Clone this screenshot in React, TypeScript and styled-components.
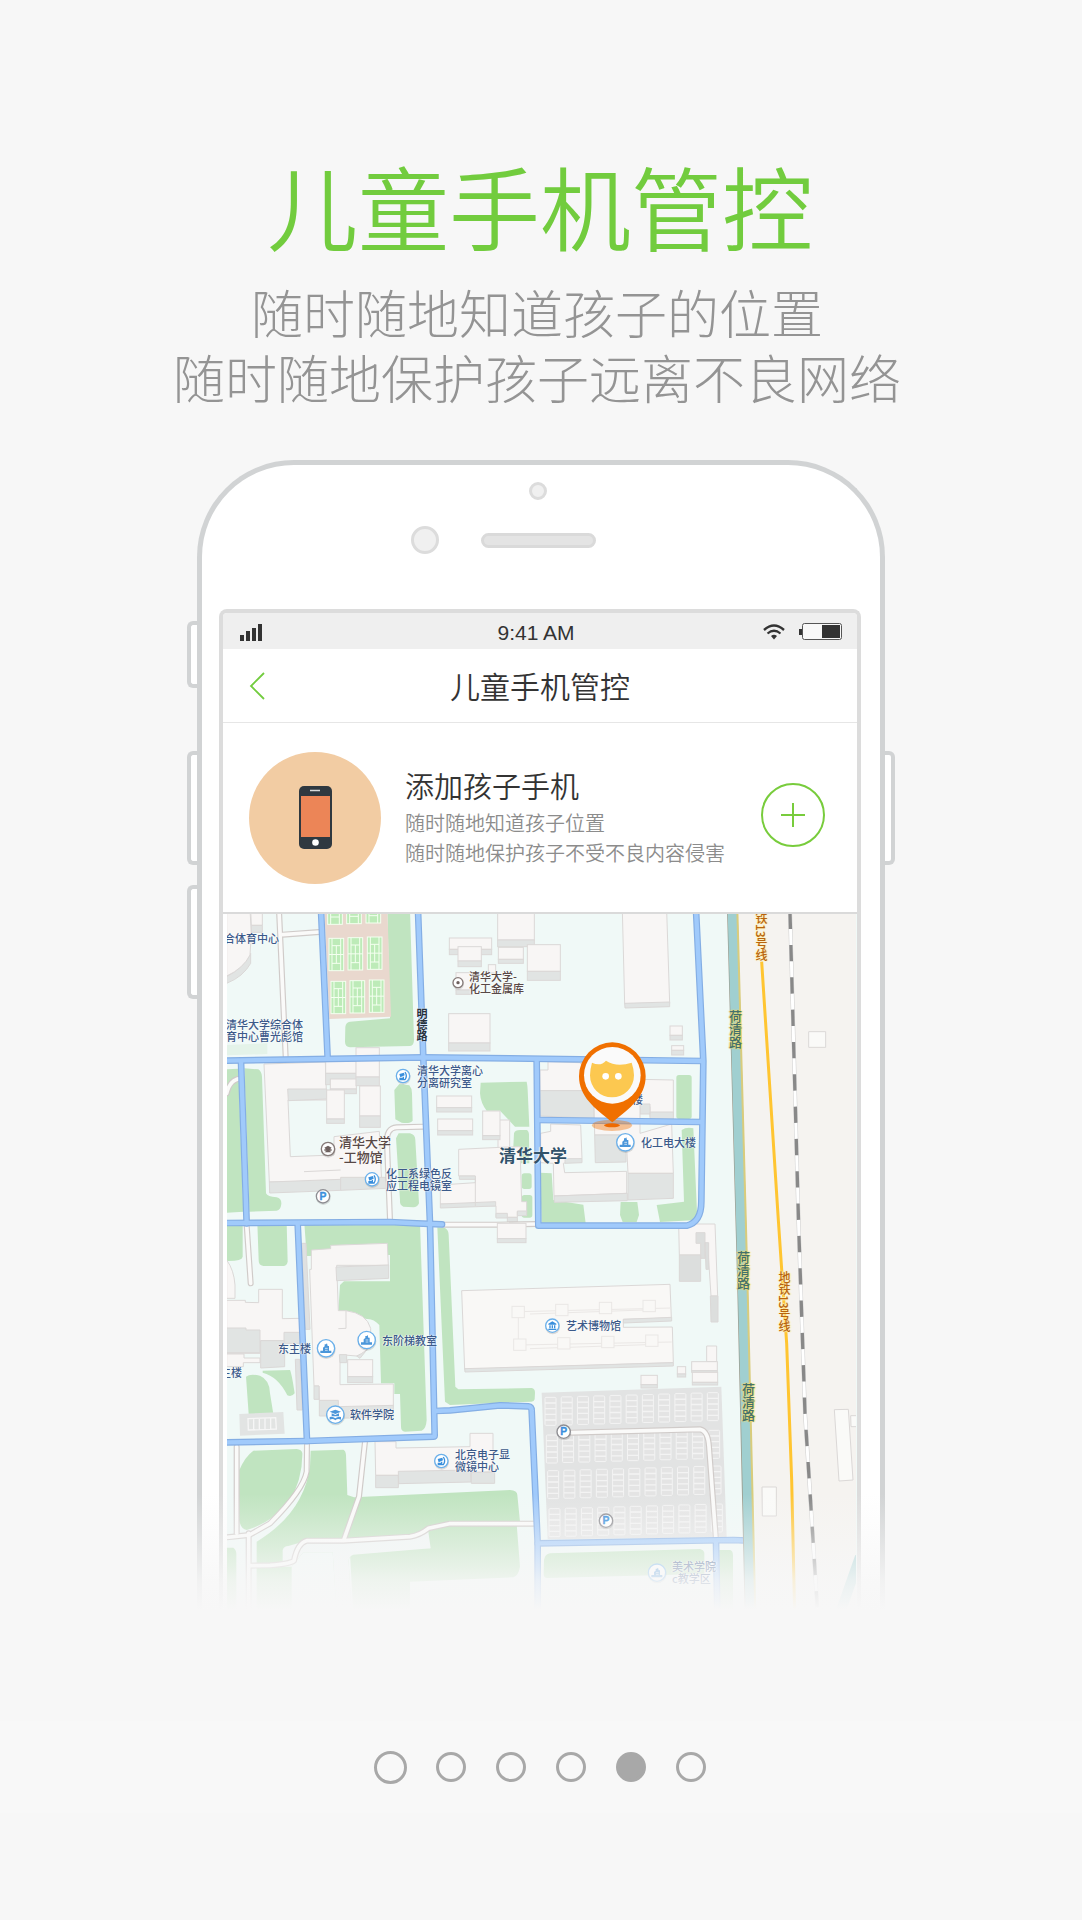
import React from 'react';
import styled, { createGlobalStyle } from 'styled-components';

const GREEN = '#72cc3e';
const PAGE = '#f7f7f7';

const GlobalStyle = createGlobalStyle`
  * { box-sizing: border-box; }
  body {
    margin: 0;
    background: ${PAGE};
    font-family: "Noto Sans CJK SC", "Noto Sans", sans-serif;
    font-weight: 350;
  }
  h1, h2, h3, p { margin: 0; font-weight: 350; }
  button { padding: 0; background: none; cursor: pointer; }
`;

const Page = styled.main`
  display: flex;
  flex-direction: column;
  align-items: center;
  min-height: 100vh;
  padding-top: 154px;
  background: ${PAGE};
  overflow: hidden;
`;

const Headline = styled.h1`
  padding-right: 2px;
  font-size: 91px;
  line-height: 100px;
  color: ${GREEN};
  text-align: center;
`;

const Lead = styled.p`
  margin-top: 25px;
  padding-right: 8px;
  font-size: 52px;
  line-height: 65px;
  font-weight: 300;
  color: #949494;
  text-align: center;
`;

const Device = styled.section`
  position: relative;
  display: flex;
  width: 100%;
  max-width: 708px;
  margin-top: 51px;
`;

const KeyColumn = styled.div<{ $top: number }>`
  display: flex;
  flex-direction: column;
  flex: none;
  width: 10px;
  padding-top: ${p => p.$top}px;
`;

const Key = styled.span<{ $height: number; $gap?: number; $right?: boolean }>`
  height: ${p => p.$height}px;
  margin-bottom: ${p => p.$gap || 0}px;
  background: #fff;
  border: 4px solid #d1d3d4;
  ${p => (p.$right ? 'border-left: 0; border-radius: 0 6px 6px 0;' : 'border-right: 0; border-radius: 6px 0 0 6px;')}
`;

const Body = styled.div`
  flex: 1;
  min-width: 0;
  padding: 0 19px 0 17px;
  background: #fff;
  border: 5px solid #d1d3d4;
  border-bottom: 0;
  border-radius: 97px 97px 0 0;
`;

const Forehead = styled.div`
  display: flex;
  flex-direction: column;
  align-items: center;
  height: 144px;
  padding: 17px 4px 0 0;
`;

const Lens = styled.span<{ $size: number }>`
  width: ${p => p.$size}px;
  height: ${p => p.$size}px;
  background: #f0f0f0;
  border: 3px solid #dcdcdc;
  border-radius: 50%;
`;

const SensorRow = styled.div`
  display: grid;
  grid-template-columns: 1fr auto 1fr;
  align-items: center;
  justify-items: end;
  gap: 42px;
  width: 100%;
  height: 28px;
  margin-top: 26px;
`;

const Speaker = styled.span`
  width: 115px;
  height: 15px;
  background: #e4e4e4;
  border: 3px solid #dadada;
  border-radius: 8px;
`;

const Screen = styled.div`
  border: 4px solid #dcdcdc;
  border-bottom: 0;
  border-radius: 8px 8px 0 0;
  overflow: hidden;
`;

const StatusBar = styled.div`
  display: grid;
  grid-template-columns: 1fr auto 1fr;
  align-items: center;
  height: 36px;
  padding: 3px 15px 0 17px;
  background: #efefef;
`;

const Clock = styled.time`
  margin-right: 10px;
  font-family: "Liberation Sans", Arial, sans-serif;
  font-weight: 400;
  font-size: 21px;
  line-height: 24px;
  color: #333;
`;

const StatusIcons = styled.div`
  display: flex;
  align-items: center;
  justify-content: flex-end;
  gap: 14px;
  padding-bottom: 2px;
`;

const NavBar = styled.header`
  display: grid;
  grid-template-columns: 60px 1fr 60px;
  align-items: center;
  height: 74px;
  border-bottom: 1px solid #e6e6e6;
`;

const BackButton = styled.button`
  display: flex;
  align-items: center;
  height: 60px;
  padding-left: 26px;
  border: 0;
`;

const NavTitle = styled.h2`
  padding-bottom: 2px;
  font-size: 30px;
  line-height: 44px;
  color: #333;
  text-align: center;
`;

const AddCard = styled.section`
  display: flex;
  align-items: center;
  gap: 24px;
  height: 191px;
  padding: 0 32px 0 26px;
  border-bottom: 2px solid #dadada;
`;

const Avatar = styled.div`
  display: flex;
  flex: none;
  align-items: center;
  justify-content: center;
  width: 132px;
  height: 132px;
  background: #f2cca3;
  border-radius: 50%;
`;

const CardText = styled.div`
  flex: 1;
  min-width: 0;
  padding-bottom: 2px;
  white-space: nowrap;
`;

const CardTitle = styled.h3`
  font-size: 29px;
  line-height: 40px;
  color: #333;
`;

const CardNote = styled.p`
  margin-top: 3px;
  font-size: 20px;
  line-height: 30px;
  color: #8c8c8c;
`;

const AddButton = styled.button`
  display: flex;
  flex: none;
  align-items: center;
  justify-content: center;
  width: 64px;
  height: 64px;
  margin-bottom: 5px;
  border: 2px solid #78cc3c;
  border-radius: 50%;
`;

const MapCanvas = styled.div`
  position: relative;
  height: 696px;
  margin-left: 4px;
  background: #f0f9f7;
  overflow: hidden;
`;

const MapLayer = styled.svg`
  position: absolute;
  top: 0;
  left: 0;
  width: 629px;
  height: 696px;
`;

type Tone = 'blue' | 'brown' | 'dark' | 'campus' | 'river' | 'metro';

const TONES: Record<Tone, { color: string; halo: string }> = {
  blue: { color: '#3c5a8a', halo: '#ffffffb3' },
  brown: { color: '#584846', halo: '#ffffffb3' },
  dark: { color: '#26313c', halo: '#ffffff80' },
  campus: { color: '#31526a', halo: '#ffffffb3' },
  river: { color: '#43706c', halo: '#f0dc70' },
  metro: { color: '#b8640e', halo: '#fff0b0' },
};

const Label = styled.span<{ $x: number; $y: number; $tone: Tone; $size: number; $vertical?: boolean }>`
  position: absolute;
  left: ${p => p.$x}px;
  top: ${p => p.$y}px;
  font-size: ${p => p.$size}px;
  line-height: ${p => (p.$size === 11 ? 12 : p.$size + 2)}px;
  font-weight: ${p => (p.$tone === 'campus' || p.$tone === 'dark' ? 700 : 500)};
  color: ${p => TONES[p.$tone].color};
  text-shadow: 0 0 2px ${p => TONES[p.$tone].halo}, 1px 0 1px ${p => TONES[p.$tone].halo}, -1px 0 1px ${p => TONES[p.$tone].halo};
  white-space: pre;
  ${p => (p.$vertical ? 'writing-mode: vertical-rl;' : '')}
`;

const Fade = styled.div`
  position: absolute;
  right: 0;
  bottom: 0;
  left: 0;
  height: 116px;
  background: linear-gradient(to bottom, #f7f7f700 0%, #f7f7f780 45%, #f7f7f7d9 75%, #f7f7f7 100%);
  pointer-events: none;
`;

const Pager = styled.nav`
  display: flex;
  align-items: center;
  justify-content: center;
  width: 100%;
  height: 92px;
  margin-top: 111px;
  padding-right: 1px;
  background: #f8f8f8;
`;

const DotCell = styled.div`
  display: flex;
  justify-content: center;
  width: 60px;
`;

const Dot = styled.button<{ $size: number; $active: boolean }>`
  width: ${p => p.$size}px;
  height: ${p => p.$size}px;
  border: 3px solid #a8a8a8;
  border-radius: 50%;
  background: ${p => (p.$active ? '#a8a8a8' : 'transparent')};
`;

/* ---------- map drawing: three units to the pixel ---------- */

const VIEW = '51 42 1887 2088';
const EDGE = '#dbd8d7';
const ROOF = '#f8f6f5';
const WALL = '#e1e4e3';
const PARK = '#c0e4c0';

const Tile = ({ x, y, children }: { x: number; y: number; children: React.ReactNode }) => (
  <g transform={`translate(${x} ${y})`}>{children}</g>
);

const Block = ({ x, y, w, h, s = 0 }: { x: number; y: number; w: number; h: number; s?: number }) => (
  <g stroke={EDGE} strokeWidth={3}>
    <rect x={x} y={y} width={w} height={h - s} fill={ROOF} />
    {s > 0 && <rect x={x} y={y + h - s} width={w} height={s} fill={WALL} />}
  </g>
);

const Court = ({ x, y, h = 97, from = 0 }: { x: number; y: number; h?: number; from?: number }) => (
  <g stroke="#f4fff0" strokeWidth={3} fill="#bdebb8">
    <rect x={x} y={y} width={44} height={h} />
    <path fill="none" d={`M${x + 9} ${y}v${h}M${x + 35} ${y}v${h}M${x + 9} ${y + h - 22}h26` + (from ? '' : `M${x + 9} ${y + 22}h26M${x + 22} ${y + 22}v${h - 44}M${x} ${y + h / 2}h44`)} />
  </g>
);

const BLUE_ROADS = [
  'M333 30L353 475',
  'M624 30L640 475L660 970L674 1607Q674 1610 670 1610L291 1623L50 1627',
  'M50 482L640 472L900 475L1478 483',
  'M93 485L110 970',
  'M50 969L540 966L620 970L696 973',
  'M263 970L291 1623',
  'M674 1533L720 1531L870 1516L955 1519Q965 1520 965 1532L983 1930L983 2140',
  'M983 1930L1570 1920L1615 1922',
  'M1518 1925L1522 2140',
  'M980 478L985 977L1430 977Q1474 966 1474 905L1480 483L1458 30',
  'M985 660L1474 666',
];

const LANES = [
  'M207 30L227 470',
  'M218 104L328 96',
  'M540 960L531 730Q528 684 560 682L640 680',
  'M50 580Q60 536 95 535',
  'M700 974L860 974L980 972',
  'M110 975L122 1150',
  'M80 1640L80 1900',
  'M291 1630L290 1715Q280 1770 180 1870L118 1905L50 1912',
  'M465 1625L447 1790L402 1918',
  'M116 1900L116 2140',
  'M120 1997L180 1996Q240 1992 252 1982Q262 1930 290 1922L400 1922L600 1910Q630 1905 655 1885L718 1871L975 1871',
  'M1085 1598L1470 1588Q1494 1592 1497 1640L1518 1920',
];

const Stall = ({ x, y }: { x: number; y: number }) => (
  <g>
    <rect x={x} y={y} width={33} height={84} rx={3} fill="#e4e4e4" stroke="#f3f3f3" strokeWidth={3} />
    <path d={`M${x} ${y + 17}h33m-33 17h33m-33 17h33m-33 17h33`} stroke="#f3f3f3" strokeWidth={4} />
  </g>
);

const Parking = () => (
  <g>
    <path d="M125 518L664 500L680 952L143 958Z" fill="#e2e3e3" />
    {[532, 645, 752, 866].map((y, r) =>
      Array.from({ length: 11 }, (_, i) => <Stall key={`${r}-${i}`} x={135 + r * 4 + i * 48.7} y={y - i * 1.4} />)
    )}
  </g>
);

type PoiKind = 'lab' | 'hall' | 'school' | 'museum' | 'parking' | 'dot' | 'shop';

const Poi = ({ x, y, kind }: { x: number; y: number; kind: PoiKind }) => {
  const big = kind === 'hall' || kind === 'school';
  const brown = kind === 'dot' || kind === 'shop';
  const r = big ? 26 : kind === 'dot' ? 15 : 20;
  const ring = brown ? '#857a78' : kind === 'parking' ? '#8d8d92' : '#6bb0ea';
  return (
    <g transform={`translate(${x} ${y})`}>
      <circle cx={1} cy={4} r={r + 2} fill="#0000001f" />
      <circle r={r} fill="#fff" stroke={ring} strokeWidth={4} />
      {kind === 'dot' && <circle r={5} fill="#6d605e" />}
      {kind === 'shop' && (
        <path d="M-11 -4L0 -10L11 -4L6 1H11V5H4L11 10H-11L-4 5H-11V1H-6Z" fill="#6d605e" />
      )}
      {kind === 'parking' && (
        <text y={11} textAnchor="middle" fontFamily="Liberation Sans, Arial, sans-serif" fontWeight={700} fontSize={31} fill="#3a8fdc" stroke="#3a8fdc" strokeWidth={1}>P</text>
      )}
      {kind === 'lab' && (
        <g fill="#3a8fdc">
          <path d="M-11 -6L3 -10L5 -2L-8 4Z" />
          <path d="M6 -12Q14 0 6 11H-9V7H1V2" fill="none" stroke="#3a8fdc" strokeWidth={4} />
        </g>
      )}
      {kind === 'hall' && (
        <g fill="#4a96da">
          <path d="M-17 14V7H-9V-2L-4 -6V-12H0L3 -15L5 -7H9V7H16V14Z" />
          <path d="M-3 0H5M-3 6H5" stroke="#fff" strokeWidth={2} />
        </g>
      )}
      {kind === 'school' && (
        <path d="M0 -15L17 -9L0 -2L-17 -9ZM-11 -4L0 1L11 -4V5H-11ZM-17 7Q-7 5 0 11Q7 5 17 7V15Q7 10 0 17Q-7 10 -17 15Z" fill="#4a96da" />
      )}
      {kind === 'museum' && (
        <path d="M-12 -6L0 -13L12 -6V-3H-12ZM-9 -1H-5V8H-9ZM-2 -1H2V8H-2ZM5 -1H9V8H5ZM-12 9H12V13H-12Z" fill="#3a8fdc" />
      )}
    </g>
  );
};

const Terrain = () => (
  <MapLayer viewBox={VIEW} aria-hidden="true">
    {/* land east of the river */}
    <path d="M1570 30H1950V2140H1645Z" fill="#f5f3f0" />

    {/* north-west: stadium, courts, physics building */}
    <Tile x={0} y={0}>
      <g fill={PARK}>
        <path d="M532 30H600L612 420Q612 437 600 438L420 442Q405 440 405 425L406 380Q408 366 420 365L540 355Z" />
        <path d="M50 508L85 506L100 935L50 938Z" />
        <path d="M103 505L145 508Q155 515 156 530L168 880Q172 890 200 892Q215 895 214 912Q212 930 200 932L118 935Z" />
        <path d="M568 552L598 556Q606 565 606 580L608 662Q600 672 575 668L556 658L553 570Z" />
        <path d="M566 700H600Q616 704 616 720L627 910Q622 922 610 922L580 920Q568 915 570 900L558 715Z" />
        <path d="M812 548L950 545Q953 560 953 570L958 680L915 680L870 632L830 632Q812 610 810 580Z" />
        <path d="M912 700Q915 690 930 690H950Q958 693 957 710L958 790H925Q910 780 910 740Z" />
        <rect x={935} y={820} width={30} height={47} rx={8} />
        <rect x={935} y={885} width={32} height={68} rx={8} />
        <path d="M50 435L172 430V462L50 466Z" opacity={0.25} />
      </g>
      <path d="M343 30H532L543 350L358 357Z" fill="#e9d8ce" />
      {[355, 412, 470].map((x, i) => (
        <g key={x}>
          <Court x={x - 2} y={30} h={43 - i * 2} from={1} />
          <Court x={x + 2} y={115 - i * 2} />
          <Court x={x + 8} y={244 - i * 2} />
        </g>
      ))}
      <g stroke={EDGE} strokeWidth={3}>
        <path d="M50 230Q100 205 122 160V190Q100 230 50 250Z" fill={WALL} />
        <path d="M50 30H120Q128 100 120 165Q100 205 50 228Z" fill={ROOF} />
        <path d="M122 30H157V76H124Z" fill={ROOF} />
        <path d="M124 76H157V97H124Z" fill={WALL} />
        <path d="M162 492L346 486L350 600L234 600L241 770L372 765L372 710L508 694L515 845L178 846Z" fill={ROOF} />
        <path d="M178 846L392 838V871L179 879Z" fill={WALL} />
        <path d="M392 832H530V865L392 871Z" fill={WALL} />
        <path d="M233 567H350V597L235 602Z" fill={WALL} />
        <path d="M282 815L392 810" fill="none" />
      </g>
      <Block x={347} y={484} w={92} h={70} s={34} />
      <Block x={361} y={537} w={78} h={44} s={14} />
      <Block x={350} y={570} w={53} h={100} s={13} />
      <Block x={438} y={443} w={70} h={114} s={26} />
      <Block x={449} y={558} w={62} h={124} s={34} />
    </Tile>

    {/* chemistry stores and central campus */}
    <Tile x={660} y={90}>
      <Block x={58} y={24} w={127} h={50} s={16} />
      <Block x={84} y={50} w={70} h={60} s={17} />
      <Block x={203} y={-60} w={110} h={110} s={20} />
      <Block x={205} y={52} w={75} h={48} s={12} />
      <Block x={292} y={44} w={99} h={107} s={27} />
      <Block x={175} y={104} w={22} h={25} />
      <Block x={78} y={128} w={48} h={65} s={13} />
      <Block x={56} y={251} w={124} h={112} s={24} />
      <Block x={20} y={498} w={105} h={48} s={13} />
      <Block x={23} y={567} w={105} h={48} s={13} />
      <Block x={204} y={570} w={35} h={85} />
      <Block x={158} y={543} w={52} h={86} s={12} />
      <g stroke={EDGE} strokeWidth={3}>
        <path d="M86 658L210 652L270 650L275 815H290V845H262V862H198V828L31 822V765L136 758V738H86Z" fill={ROOF} />
        <path d="M88 738H136V748H88ZM31 822L197 815V828L31 834ZM198 850H232V864H198ZM262 843H290V857H262ZM232 862H262V876H232Z" fill={WALL} />
        <path d="M136 745V828" />
      </g>
    </Tile>

    {/* electrical and chemical building */}
    <Tile x={870} y={0}>
      <g fill={PARK}>
        <rect x={529} y={525} width={46} height={132} rx={8} />
        <path d="M120 818L155 820L160 900L250 914L257 970H125Z" />
        <path d="M362 906H412L417 945L410 966H368L360 945Z" />
        <path d="M545 690Q560 680 580 685L592 960L480 966L470 915L552 905Z" />
      </g>
      <g stroke={EDGE} strokeWidth={3}>
        <path d="M367 30H500L509 310L374 312Z" fill={ROOF} />
        <path d="M374 310L509 306V320L375 324Z" fill={WALL} />
        <path d="M144 485L240 488L300 572H120V510H144Z" fill={ROOF} />
        <path d="M120 572H282V655L120 648Z" fill={WALL} />
        <path d="M420 538L520 540V650H450V620H420Z" fill={ROOF} />
        <path d="M420 612H450V642H420ZM450 636H520V658H450Z" fill={WALL} />
        <path d="M122 700L152 694V672L242 675L246 776L190 790L194 818L380 814V880L162 888L160 790L122 788Z" fill={ROOF} />
        <path d="M195 776H246V788L195 790ZM162 888L382 880V902L163 907Z" fill={WALL} />
        <path d="M282 610L420 600V700L515 672L520 820H384L378 705H284Z" fill={ROOF} />
        <path d="M284 705H378V786L286 788ZM384 820H520V895L384 900Z" fill={WALL} />
      </g>
      <Block x={510} y={378} w={37} h={42} s={14} />
      <Block x={515} y={437} w={36} h={28} s={14} />
      <path d="M926 395H977V442H926Z" fill="#fafaf8" stroke={EDGE} strokeWidth={3} />
    </Tile>

    {/* south-west: teaching buildings and gardens */}
    <Tile x={0} y={960}>
      <g fill={PARK}>
        <path d="M50 10H98V110Q96 124 50 123Z" />
        <path d="M142 10H230L233 125Q230 138 220 138H160Q145 136 146 120Z" />
        <path d="M283 10H630L650 600Q648 628 635 632L585 635Q573 634 573 620L570 522H553V490H513L508 315Q490 295 470 297L385 272L390 195L402 184H540V105L290 108Z" />
        <path d="M682 22L705 24Q716 30 716 45L736 500L745 508L965 504Q975 506 975 518L974 538Q972 546 962 545L720 555L705 545Z" />
        <path d="M108 470Q120 460 150 467Q180 480 180 520L190 582H116Z" />
        <path d="M158 452L240 450Q245 460 254 520Q245 532 232 526Q205 470 158 458Z" />
        <path d="M130 692L260 687Q275 688 277 700Q278 780 235 850Q180 910 110 930Q90 925 88 900V750Q105 710 130 692Z" />
        <path d="M302 692L400 689Q407 692 408 705L412 825L432 832L900 810Q922 812 922 825L930 905L660 936L662 985L430 1004Q415 1010 416 1025L425 1180H380L368 997H280L245 1040V1180H140V965Q280 880 300 740Z" />
        <path d="M50 983H70Q80 990 79 1005V1180H50Z" />
        <path d="M655 920L920 912L930 1040Q925 1068 910 1072L600 1085V1180H430L420 1000L660 985Z" />
      </g>
      <path d="M218 990Q222 978 235 978L290 962L400 962L600 952L655 935L662 985L430 1004Q415 1010 416 1025L425 1180H380L368 997H280L245 1040H218Z" fill="#f0f6f5" />
      <g stroke={EDGE} strokeWidth={3}>
        <path d="M50 120Q72 150 75 195V235H50Z" fill={ROOF} />
        <path d="M50 241L106 241V247L146 248V208H217V296L270 295V340L220 362H152V400H50Z" fill={ROOF} />
        <path d="M50 324H108V330H150V398H50ZM222 337H277V370H222Z M152 362H224V440L152 444Z" fill={WALL} />
        <path d="M50 402H102V414H150V428H100V440H50Z" fill={ROOF} />
        <path d="M275 70H288L300 328H286ZM256 418H270L277 570H261Z" fill="#dfe1e1" />
        <path d="M304 90L362 86V76L532 70L535 136H380L385 272H408Q470 280 482 325V372Q462 410 440 408L390 404V494L550 492V558L388 570L328 541L327 498H312L299 148H304Z" fill={ROOF} />
        <path d="M378 141L536 135V175L380 182ZM312 498H327V538H312ZM328 541H385V588H328ZM385 560L550 556V590L385 595ZM388 404H410V428H390ZM440 408Q470 395 480 375L462 400L450 415Z" fill={WALL} />
        <path d="M385 326L408 325V272" fill="none" />
        <path d="M495 665H558V684L780 680V640H849V755L565 766H497Z" fill={ROOF} />
        <path d="M497 766H565V803H497ZM565 754L783 750V786L566 791ZM783 757H854V790H784Z" fill={WALL} />
      </g>
      <Block x={413} y={419} w={75} h={69} s={18} />
      <path d="M88 582L220 576L224 641L90 647Z" fill="#e2e4e3" />
      <path d="M114 596L197 593L199 627L115 630ZM131 596V629M148 595V629M165 594V628M182 594V628" fill="none" stroke="#f6f6f6" strokeWidth={4} />
    </Tile>

    {/* south-east: museum and parking */}
    <Tile x={870} y={960}>
      <g fill={PARK}>
        <path d="M132 1020Q135 1002 150 1000L600 987Q612 990 613 1000V1062L140 1074Q130 1072 131 1060Z" />
        <path d="M658 990H690Q698 992 699 1005V1180H660Z" />
      </g>
      <g stroke={EDGE} strokeWidth={3}>
        <path d="M-115 212L510 193L514 294L370 298V322L517 321L520 428L-106 448Z" fill="#f9f8f6" />
        <path d="M-106 446L520 428V438L-105 456ZM370 298L515 292V303L370 309Z" fill={WALL} />
        <path d="M55 275L515 264M55 375L515 366M55 275V375M90 282L430 270M90 386L440 374" fill="none" stroke="#ebe8e6" />
      </g>
      {[0, 1, 2, 3].map(i => (
        <g key={i} fill="#f9f8f6" stroke="#eae7e5" strokeWidth={3}>
          <rect x={36 + i * 131} y={259 - i * 6} width={37} height={34} />
          <rect x={41 + i * 132} y={357 - i * 4} width={37} height={34} />
        </g>
      ))}
      <g stroke={EDGE} strokeWidth={3}>
        <path d="M536 12H645L653 228H633L625 105H538Z" fill={ROOF} />
        <path d="M538 105H602V184H538ZM588 38H615V115H602V70H588ZM615 68H626V148H618ZM631 228H654V306H633Z" fill="#dcdedd" />
        <path d="M620 378H650V425H620Z" fill={ROOF} />
      </g>
      <Block x={575} y={425} w={77} h={32} s={5} />
      <Block x={577} y={457} w={76} h={38} s={8} />
      <Block x={532} y={440} w={25} h={31} s={9} />
      <Block x={423} y={466} w={49} h={38} s={10} />
      <Parking />
      <g fill="#fafaf8" stroke={EDGE} strokeWidth={3}>
        <path d="M1003 569L1045 568L1059 780L1017 783ZM1052 587H1080V620H1053ZM786 801H829V888H787Z" />
      </g>
    </Tile>

    {/* lanes, then streets, so that junctions stay clean */}
    <g fill="none" strokeLinejoin="round" strokeLinecap="round">
      {LANES.map(d => <path key={d} d={d} stroke="#d0cbc9" strokeWidth={18} />)}
      {LANES.map(d => <path key={d} d={d} stroke="#fafaf9" strokeWidth={11} />)}
      {BLUE_ROADS.map(d => <path key={d} d={d} stroke="#84aee4" strokeWidth={20} />)}
      {BLUE_ROADS.map(d => <path key={d} d={d} stroke="#a0cafb" strokeWidth={13} />)}
    </g>
    <Tile x={870} y={960}>
      <Block x={-8} y={10} w={86} h={58} s={12} />
    </Tile>

    {/* river, metro and railway */}
    <g fill="none">
      <path d="M1567 30L1597 1130L1620 2140" stroke="#9c9d90" strokeWidth={32} />
      <path d="M1570 30L1600 1130L1624 2140" stroke="#d9cc7c" strokeWidth={30} />
      <path d="M1566 30L1596 1130L1620 2140" stroke="#a0cfd0" strokeWidth={26} />
      <path d="M1655 185L1705 960L1730 1330L1745 1740L1754 2140" stroke="#ffc531" strokeWidth={9} />
      <path d="M1740 30L1766 980L1785 1540L1823 2140" stroke="#cfcfcf" strokeWidth={12} />
      <path d="M1740 30L1766 980L1785 1540L1823 2140" stroke="#fff" strokeWidth={9} />
      <path d="M1740 38L1766 980L1785 1540L1823 2140" stroke="#888" strokeWidth={10} strokeDasharray="49 48" />
      <path d="M1950 1970L1890 2140" stroke="#a0cfd0" strokeWidth={30} />
    </g>

    <Poi x={744} y={248} kind="dot" />
    <Poi x={579} y={528} kind="lab" />
    <Poi x={354} y={747} kind="shop" />
    <Poi x={486} y={838} kind="lab" />
    <Poi x={339} y={889} kind="parking" />
    <Poi x={1246} y={727} kind="hall" />
    <Poi x={348} y={1345} kind="hall" />
    <Poi x={470} y={1320} kind="hall" />
    <Poi x={376} y={1544} kind="school" />
    <Poi x={694} y={1683} kind="lab" />
    <Poi x={1027} y={1277} kind="museum" />
    <Poi x={1061} y={1595} kind="parking" />
    <Poi x={1188} y={1862} kind="parking" />
    <Poi x={1341} y={2018} kind="hall" />
  </MapLayer>
);

const ChildPin = () => (
  <MapLayer viewBox={VIEW} role="img" aria-label="孩子的位置">
    <g transform="translate(870 0)">
      <ellipse cx={336} cy={676} rx={60} ry={17} fill="#f0700066" />
      <ellipse cx={336} cy={676} rx={24} ry={6} fill="#ee6a00" />
      <path d="M337 427A100 102 0 0 1 437 529C437 590 390 625 337 667C284 625 237 590 237 529A100 102 0 0 1 337 427Z" fill="#f07000" />
      <circle cx={337} cy={526} r={85} fill="#fafafa" />
      <path d="M276 488Q302 500 318 482Q350 503 395 488Q402 508 402 526A66 66 0 1 1 270 526Q270 508 276 488Z" fill="#fcc850" />
      <circle cx={317} cy={529} r={10} fill="#fff" />
      <circle cx={355} cy={529} r={10} fill="#fff" />
    </g>
  </MapLayer>
);

interface Place { x: number; y: number; text: string; tone?: Tone; size?: number; vertical?: boolean }

const PLACES: Place[] = [
  { x: -3, y: 18, text: '合体育中心' },
  { x: -1, y: 104, text: '清华大学综合体\n育中心曹光彪馆' },
  { x: 189, y: 94, text: '明德路', tone: 'dark', vertical: true },
  { x: 242, y: 56, text: '清华大学-\n化工金属库', tone: 'brown' },
  { x: 190, y: 150, text: '清华大学离心\n分离研究室' },
  { x: 112, y: 220, text: '清华大学\n-工物馆', tone: 'brown', size: 13 },
  { x: 159, y: 253, text: '化工系绿色反\n应工程电镜室' },
  { x: 272, y: 231, text: '清华大学', tone: 'campus', size: 17 },
  { x: 405, y: 179, text: '楼' },
  { x: 414, y: 222, text: '化工电大楼' },
  { x: 501, y: 96, text: '荷清路', tone: 'river', size: 13, vertical: true },
  { x: 509, y: 337, text: '荷清路', tone: 'river', size: 13, vertical: true },
  { x: 514, y: 469, text: '荷清路', tone: 'river', size: 13, vertical: true },
  { x: 527, y: -2, text: '铁13号线', tone: 'metro', size: 12, vertical: true },
  { x: 550, y: 357, text: '地铁13号线', tone: 'metro', size: 12, vertical: true },
  { x: 339, y: 405, text: '艺术博物馆' },
  { x: 155, y: 420, text: '东阶梯教室' },
  { x: 51, y: 428, text: '东主楼' },
  { x: -7, y: 452, text: '主楼' },
  { x: 123, y: 494, text: '软件学院' },
  { x: 228, y: 534, text: '北京电子显\n微镜中心' },
  { x: 445, y: 646, text: '美术学院\nc教学区' },
];

const SignalIcon = () => (
  <svg width="23" height="17" viewBox="0 0 23 17" fill="#333" aria-hidden="true">
    <path d="M0 11h4v6H0zM6 7h4v10H6zM12 4h4v13h-4zM18 0h4v17h-4z" />
  </svg>
);

const WifiIcon = () => (
  <svg width="22" height="16" viewBox="0 0 22 16" fill="none" stroke="#333" aria-hidden="true">
    <path d="M1 6Q11 -3 21 6" strokeWidth="2.4" />
    <path d="M4.500 9.500Q11 4 17.500 9.500" strokeWidth="2.200" />
    <path d="M8 12Q11 9.500 14 12L11 15.500Z" fill="#333" stroke="none" />
  </svg>
);

const BatteryIcon = () => (
  <svg width="43" height="17" viewBox="0 0 43 17" aria-hidden="true">
    <path d="M0 6h3v6H0z" fill="#333" />
    <rect x="3.500" y="0.500" width="39" height="16" rx="2" fill="#f8f8f8" stroke="#555" />
    <path d="M23 2h18v13H23z" fill="#333" />
  </svg>
);

const PhoneIcon = () => (
  <svg width="33" height="63" viewBox="0 0 33 63" aria-hidden="true">
    <rect width="33" height="63" rx="5" fill="#2f3840" />
    <path d="M2 10h29v41H2z" fill="#ec8557" />
    <path d="M11 4.500h10" stroke="#d8dadb" strokeWidth="1.500" />
    <circle cx="16.500" cy="56.500" r="3.300" fill="#fff" />
  </svg>
);

const App = () => (
  <>
    <GlobalStyle />
    <Page lang="zh-CN">
      <Headline>儿童手机管控</Headline>
      <Lead>随时随地知道孩子的位置<br />随时随地保护孩子远离不良网络</Lead>

      <Device>
        <KeyColumn $top={161}>
          <Key $height={67} $gap={63} />
          <Key $height={114} $gap={20} />
          <Key $height={114} />
        </KeyColumn>
        <Body>
          <Forehead>
            <Lens $size={18} />
            <SensorRow>
              <Lens $size={28} />
              <Speaker />
            </SensorRow>
          </Forehead>
          <Screen>
            <StatusBar>
              <SignalIcon />
              <Clock>9:41 AM</Clock>
              <StatusIcons><WifiIcon /><BatteryIcon /></StatusIcons>
            </StatusBar>
            <NavBar>
              <BackButton type="button" aria-label="返回">
                <svg width="16" height="28" viewBox="0 0 16 28" fill="none" stroke={GREEN} strokeWidth="1.800" aria-hidden="true">
                  <path d="M15 1L2 14L15 27" />
                </svg>
              </BackButton>
              <NavTitle>儿童手机管控</NavTitle>
            </NavBar>
            <AddCard>
              <Avatar><PhoneIcon /></Avatar>
              <CardText>
                <CardTitle>添加孩子手机</CardTitle>
                <CardNote>随时随地知道孩子位置<br />随时随地保护孩子不受不良内容侵害</CardNote>
              </CardText>
              <AddButton type="button" aria-label="添加">
                <svg width="26" height="26" viewBox="0 0 26 26" stroke="#78cc3c" strokeWidth="2" aria-hidden="true">
                  <path d="M1 13h24M13 1v24" />
                </svg>
              </AddButton>
            </AddCard>
            <MapCanvas>
              <Terrain />
              {PLACES.map(p => (
                <Label key={`${p.text}${p.y}`} $x={p.x} $y={p.y} $tone={p.tone || 'blue'} $size={p.size || 11} $vertical={p.vertical}>
                  {p.text}
                </Label>
              ))}
              <ChildPin />
            </MapCanvas>
          </Screen>
        </Body>
        <KeyColumn $top={291}>
          <Key $height={114} $right />
        </KeyColumn>
        <Fade />
      </Device>

      <Pager aria-label="引导页">
        {[1, 2, 3, 4, 5, 6].map(n => (
          <DotCell key={n}>
            <Dot type="button" $size={n === 1 ? 33 : 30} $active={n === 5} aria-label={`第${n}页`} />
          </DotCell>
        ))}
      </Pager>
    </Page>
  </>
);

export default App;
